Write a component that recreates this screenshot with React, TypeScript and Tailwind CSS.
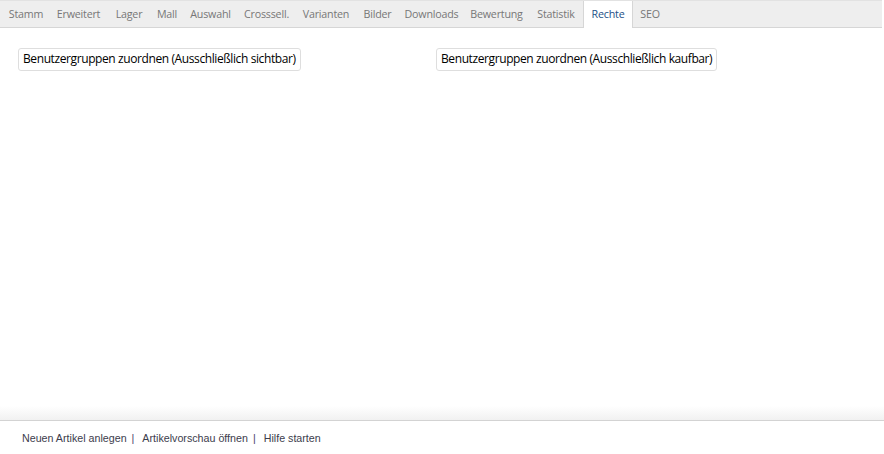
const tabs = [
  { name: "Stamm", w: "w-[46px]" },
  { name: "Erweitert", w: "w-[59px]" },
  { name: "Lager", w: "w-[42px]" },
  { name: "Mall", w: "w-[34px]" },
  { name: "Auswahl", w: "w-[53px]" },
  { name: "Crosssell.", w: "w-[59px]" },
  { name: "Varianten", w: "w-[60px]" },
  { name: "Bilder", w: "w-[43px]" },
  { name: "Downloads", w: "w-[65px]" },
  { name: "Bewertung", w: "w-[65px]" },
  { name: "Statistik", w: "w-[54px]" },
  { name: "Rechte", w: "w-[50px]", active: true },
  { name: "SEO", w: "w-[34px]" },
];

export default function App() {
  return (
    <div className="h-[454px] w-[884px] flex flex-col bg-white font-['Open_Sans',sans-serif]">
      {/* Tabs */}
      <div className="h-[28px] flex items-end pl-[3px] bg-[#eeeeee] border-t border-[#e2e2e2] border-b border-b-[#d6d6d6] mr-[2px]">
        {tabs.map((t) =>
          t.active ? (
            <div
              key={t.name}
              className={`${t.w} h-[27px] -mb-px flex items-center justify-center bg-white border-x border-[#d6d6d6] text-[10.7px] text-[#1d4f87] tracking-[-0.2px]`}
            >
              {t.name}
            </div>
          ) : (
            <div
              key={t.name}
              className={`${t.w} h-[26px] flex items-center justify-center text-[10.7px] text-[#777777] tracking-[-0.2px]`}
            >
              {t.name}
            </div>
          )
        )}
      </div>

      {/* Content */}
      <div className="flex-1 flex items-start pl-[18px] pt-[17px]">
        <div className="w-[418px]">
          <div className="inline-flex h-[23px] items-center px-[4px] border border-[#dedede] rounded-[3px] text-[12px] text-black tracking-[-0.4px]">
            Benutzergruppen zuordnen (Ausschließlich sichtbar)
          </div>
        </div>
        <div>
          <div className="inline-flex h-[23px] items-center px-[4px] border border-[#dedede] rounded-[3px] text-[12px] text-black tracking-[-0.4px]">
            Benutzergruppen zuordnen (Ausschließlich kaufbar)
          </div>
        </div>
      </div>

      {/* Footer */}
      <div className="h-[14px] bg-gradient-to-b from-white to-[#f1f1f1]" />
      <div className="h-[34px] border-t border-[#d3d3d3] flex items-center pl-[22px] pt-[2px] font-['Liberation_Sans',Arial,sans-serif] text-[10.7px] text-[#3c3c4c]">
        <span>Neuen Artikel anlegen</span>
        <span className="ml-[5px] mr-[8px] text-[#4a3f6b]">|</span>
        <span>Artikelvorschau öffnen</span>
        <span className="ml-[5px] mr-[8px] text-[#4a3f6b]">|</span>
        <span>Hilfe starten</span>
      </div>
    </div>
  );
}
